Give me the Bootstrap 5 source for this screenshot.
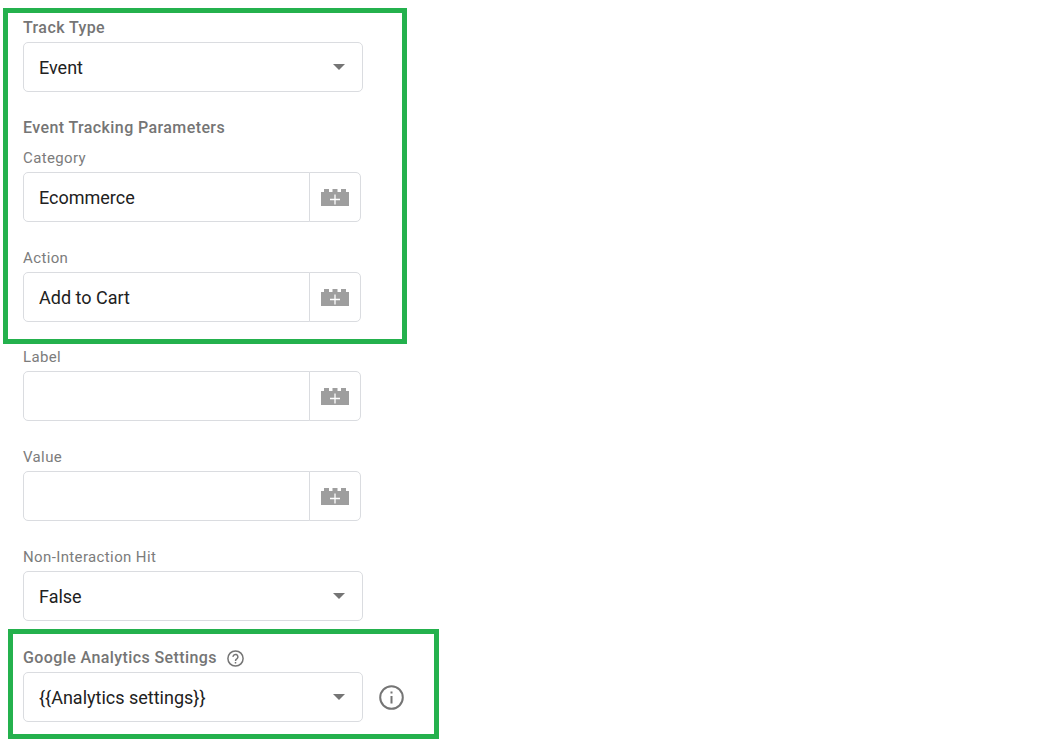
<!DOCTYPE html>
<html lang="en">
<head>
<meta charset="utf-8">
<meta name="viewport" content="width=device-width, initial-scale=1">
<title>Tag Configuration</title>
<link href="https://cdn.jsdelivr.net/npm/bootstrap@5.3.0/dist/css/bootstrap.min.css" rel="stylesheet">
<style>
  body { font-family: Roboto, "Liberation Sans", sans-serif; color: #212121; background: #fff; }
  .outlined { border: 5px solid #24b14d; max-width: 404px; margin-left: 3px; padding: 3px 15px 17px; }
  .outlined-wide { max-width: 431px; margin-left: 8px; padding: 12px 10px; }
  .plain-fields { max-width: 404px; margin-left: 3px; padding: 1px 20px 8px; }
  .field-group + .field-group { margin-top: 24px; }
  .field-label, .field-title { display: block; font-size: 15px; line-height: 24px; margin: 0 0 2px; color: #7c7c7c; letter-spacing: .025em; }
  .field-title { font-size: 16px; font-weight: 500; color: #757575; }
  .group-title { margin-bottom: 6px; }
  .form-select, .form-control, .brick-btn { height: 50px; border: 1px solid #dadce0; border-radius: 5px; font-size: 18px; color: #212121; }
  .form-select { max-width: 340px; padding: 0 40px 0 15px; background: #fff url("data:image/svg+xml,%3Csvg xmlns='http://www.w3.org/2000/svg' viewBox='0 0 12 6'%3E%3Cpath d='M0 0h12L6 6z' fill='%23757575'/%3E%3C/svg%3E") no-repeat right 17px center / 12px 6px; }
  .form-control { padding: 0 15px; }
  .input-group { max-width: 338px; }
  .brick-btn { width: 52px; padding: 0; background: #fff; display: flex; align-items: center; justify-content: center; }
  .icon-btn { border: 0; padding: 0; background: none; color: #757575; line-height: 0; }
  .help-btn { margin: 0 0 2px 10px; }
</style>
</head>
<body>
<svg class="d-none" aria-hidden="true">
  <symbol id="brick" viewBox="0 0 28 17">
    <path fill="#9e9e9e" d="M0 3h3V0h5v3h3.500V0h5v3h3.500V0h5v3h3v14H0z"/>
    <path fill="none" stroke="#fff" stroke-width="1.300" d="M14 5.500v10M9 10.500h10"/>
  </symbol>
</svg>
<main class="pt-2">
  <form>
    <section class="outlined">
      <div class="field-group">
        <label class="field-title" for="track">Track Type</label>
        <select class="form-select" id="track"><option>Event</option></select>
      </div>
      <div class="field-group">
        <h2 class="field-title group-title">Event Tracking Parameters</h2>
        <label class="field-label" for="category">Category</label>
        <div class="input-group flex-nowrap">
          <input class="form-control" id="category" type="text" value="Ecommerce">
          <button class="btn brick-btn" type="button" aria-label="Insert variable in Category"><svg width="28" height="17"><use href="#brick"/></svg></button>
        </div>
      </div>
      <div class="field-group">
        <label class="field-label" for="action">Action</label>
        <div class="input-group flex-nowrap">
          <input class="form-control" id="action" type="text" value="Add to Cart">
          <button class="btn brick-btn" type="button" aria-label="Insert variable in Action"><svg width="28" height="17"><use href="#brick"/></svg></button>
        </div>
      </div>
    </section>

    <section class="plain-fields">
      <div class="field-group">
        <label class="field-label" for="label">Label</label>
        <div class="input-group flex-nowrap">
          <input class="form-control" id="label" type="text">
          <button class="btn brick-btn" type="button" aria-label="Insert variable in Label"><svg width="28" height="17"><use href="#brick"/></svg></button>
        </div>
      </div>
      <div class="field-group">
        <label class="field-label" for="value">Value</label>
        <div class="input-group flex-nowrap">
          <input class="form-control" id="value" type="text">
          <button class="btn brick-btn" type="button" aria-label="Insert variable in Value"><svg width="28" height="17"><use href="#brick"/></svg></button>
        </div>
      </div>
      <div class="field-group">
        <label class="field-label" for="hit">Non-Interaction Hit</label>
        <select class="form-select" id="hit"><option>False</option></select>
      </div>
    </section>

    <section class="outlined outlined-wide">
      <div class="d-flex align-items-center">
        <label class="field-title" for="settings">Google Analytics Settings</label>
        <button class="icon-btn help-btn" type="button" aria-label="Help">
          <svg width="17" height="17" viewBox="0 0 17 17" fill="none" stroke="currentColor" stroke-width="1.500"><circle cx="8.500" cy="8.500" r="7.600"/><path d="M6.100 6.900a2.400 2.400 0 1 1 4.100 1.600C9.300 9.300 8.500 9.600 8.500 10.900M8.500 11.900v1.600"/></svg>
        </button>
      </div>
      <div class="d-flex align-items-center gap-3">
        <select class="form-select" id="settings"><option>{{Analytics settings}}</option></select>
        <button class="icon-btn" type="button" aria-label="Information">
          <svg width="25" height="25" viewBox="0 0 25 25" fill="none" stroke="currentColor" stroke-width="2"><circle cx="12.500" cy="12.500" r="11.300"/><path d="M12.500 11v7.500M12.500 6.500v2"/></svg>
        </button>
      </div>
    </section>
  </form>
</main>
<script src="https://cdn.jsdelivr.net/npm/bootstrap@5.3.0/dist/js/bootstrap.bundle.min.js"></script>
</body>
</html>
